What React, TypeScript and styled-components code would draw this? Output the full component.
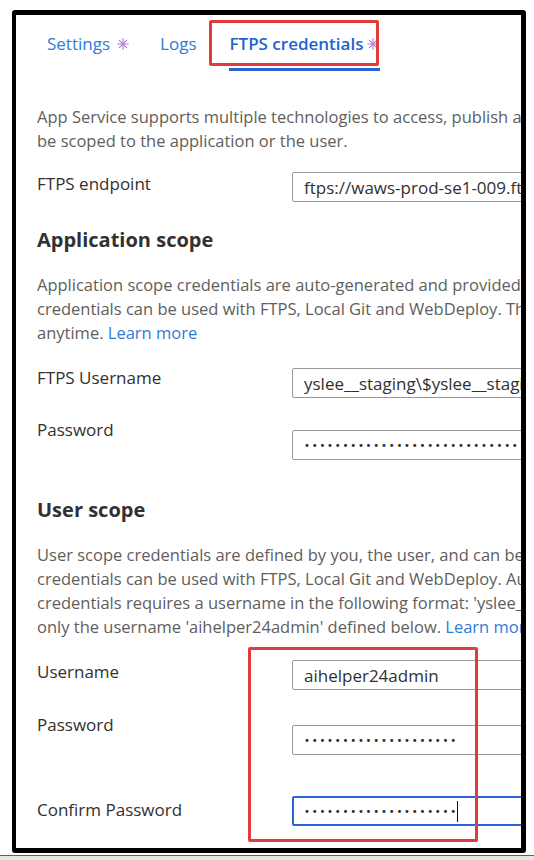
import styled, { createGlobalStyle } from "styled-components";

const GlobalStyle = createGlobalStyle`
  html, body {
    margin: 0;
    padding: 0;
    background: #ffffff;
  }
  body {
    font-family: "Open Sans", "Noto Sans", Arial, sans-serif;
    -webkit-font-smoothing: antialiased;
  }
`

const Page = styled.div`
  width: 534px;
  height: 860px;
  overflow: hidden;
  padding-top: 10px;
  box-sizing: border-box;
`

const Frame = styled.div`
  position: relative;
  margin-left: 12px;
  width: 514px;
  height: 843px;
  box-sizing: border-box;
  border: 5px solid #000;
  border-left-width: 4px;
  border-radius: 3px;
  overflow: hidden;
  background: #fff;
`

const Content = styled.div`
  width: 640px;
  padding: 17px 0 0 21px;
  box-sizing: border-box;
`

const TabBar = styled.div`
  display: flex;
  align-items: flex-start;
  padding-left: 10px;
`

const Tab = styled.div<{ $active?: boolean; $space: number }>`
  display: flex;
  align-items: center;
  gap: ${(p) => (p.$active ? 4 : 7)}px;
  margin-right: ${(p) => p.$space}px;
  font-size: 17px;
  line-height: 24px;
  color: ${(p) => (p.$active ? "#1d64cc" : "#2f7bd8")};
  font-weight: ${(p) => (p.$active ? 600 : 400)};
  padding: 0 1px 12px 0;
  border-bottom: 3px solid ${(p) => (p.$active ? "#2b61d1" : "transparent")};
`

const Star = styled.svg`
  width: 12px;
  height: 12px;
  flex: none;
`

const Paragraph = styled.p<{ $top: number }>`
  margin: ${(p) => p.$top}px 0 0;
  font-size: 16.5px;
  line-height: 24px;
  color: #605e5c;
  white-space: nowrap;
`

const Link = styled.span`
  color: #2f7bd8;
`

const Heading = styled.h2<{ $top: number }>`
  margin: ${(p) => p.$top}px 0 0;
  font-size: 20px;
  line-height: 24px;
  font-weight: 700;
  color: #323130;
`

const Row = styled.div<{ $top: number }>`
  display: grid;
  grid-template-columns: 255px 1fr;
  align-items: start;
  margin-top: ${(p) => p.$top}px;
`

const Label = styled.div<{ $offset?: number }>`
  padding-top: ${(p) => p.$offset ?? 0}px;
  font-size: 17px;
  line-height: 24px;
  color: #323130;
  white-space: nowrap;
`

const Field = styled.div<{ $offset?: number; $focused?: boolean }>`
  margin-top: ${(p) => p.$offset ?? 0}px;
  width: 320px;
  height: 30px;
  box-sizing: border-box;
  display: flex;
  align-items: center;
  padding-left: ${(p) => (p.$focused ? 10 : 11)}px;
  border: ${(p) => (p.$focused ? "2px solid #2b62d6" : "1px solid #9a9896")};
  border-radius: 2px;
  font-size: 17px;
  color: #323130;
  white-space: nowrap;
  overflow: hidden;
`

const Dots = styled.span`
  font-family: "DejaVu Sans", sans-serif;
  font-size: 10px;
  letter-spacing: 1.8px;
  color: #2b2b2b;
`

const Caret = styled.span`
  display: inline-block;
  width: 1px;
  height: 21px;
  background: #111;
  margin-left: -1px;
`

const Highlight = styled.div<{ $x: number; $y: number; $w: number; $h: number }>`
  position: absolute;
  left: ${(p) => p.$x}px;
  top: ${(p) => p.$y}px;
  width: ${(p) => p.$w}px;
  height: ${(p) => p.$h}px;
  box-sizing: border-box;
  border: 3px solid #e23b3b;
  border-radius: 2px;
  pointer-events: none;
`

const BottomStrip = styled.div`
  margin-top: 2px;
  height: 6px;
  border-top: 1px solid #5f5f5f;
  background: #e6e6e6;
`

function Asterisk() {
  return (
    <Star viewBox="0 0 12 12">
      <g stroke="#a77bd9" strokeWidth="1.1" strokeLinecap="round">
        <line x1="6" y1="0.8" x2="6" y2="11.2" />
        <line x1="0.8" y1="6" x2="11.2" y2="6" />
        <line x1="2.3" y1="2.3" x2="9.7" y2="9.7" />
        <line x1="9.7" y1="2.3" x2="2.3" y2="9.7" />
      </g>
    </Star>
  );
}

const dots = (n: number) => "•".repeat(n);

export default function App() {
  return (
    <Page>
      <GlobalStyle />
      <Frame>
        <Content>
          <TabBar>
            <Tab $space={30}>Settings <Asterisk /></Tab>
            <Tab $space={32}>Logs</Tab>
            <Tab $space={0} $active>FTPS credentials <Asterisk /></Tab>
          </TabBar>

          <Paragraph $top={34}>
            App Service supports multiple technologies to access, publish and manage your app. Credentials can
            <br />
            be scoped to the application or the user.
          </Paragraph>

          <Row $top={19}>
            <Label>FTPS endpoint</Label>
            <Field>ftps://waws-prod-se1-009.ftp.azurewebsites.windows.net/site/wwwroot</Field>
          </Row>

          <Heading $top={26}>Application scope</Heading>
          <Paragraph $top={21}>
            Application scope credentials are auto-generated and provided for each app. These
            <br />
            credentials can be used with FTPS, Local Git and WebDeploy. They can be reset
            <br />
            anytime. <Link>Learn more</Link>
          </Paragraph>

          <Row $top={21}>
            <Label>FTPS Username</Label>
            <Field $offset={2}>yslee__staging\$yslee__staging</Field>
          </Row>
          <Row $top={20}>
            <Label>Password</Label>
            <Field $offset={12}><Dots>{dots(40)}</Dots></Field>
          </Row>

          <Heading $top={38}>User scope</Heading>
          <Paragraph $top={21}>
            User scope credentials are defined by you, the user, and can be used with all the apps
            <br />
            credentials can be used with FTPS, Local Git and WebDeploy. Authenticating with user scope
            <br />
            credentials requires a username in the following format: 'yslee__staging\aihelper24admin'
            <br />
            only the username 'aihelper24admin' defined below. <Link>Learn more</Link>
          </Paragraph>

          <Row $top={21}>
            <Label>Username</Label>
            <Field>aihelper24admin</Field>
          </Row>
          <Row $top={23}>
            <Label>Password</Label>
            <Field $offset={12}><Dots>{dots(20)}</Dots></Field>
          </Row>
          <Row $top={41}>
            <Label $offset={2}>Confirm Password</Label>
            <Field $focused><Dots>{dots(20)}</Dots><Caret /></Field>
          </Row>
        </Content>

        <Highlight $x={193} $y={5} $w={170} $h={46} />
        <Highlight $x={232} $y={632} $w={230} $h={195} />
      </Frame>
      <BottomStrip />
    </Page>
  );
}
